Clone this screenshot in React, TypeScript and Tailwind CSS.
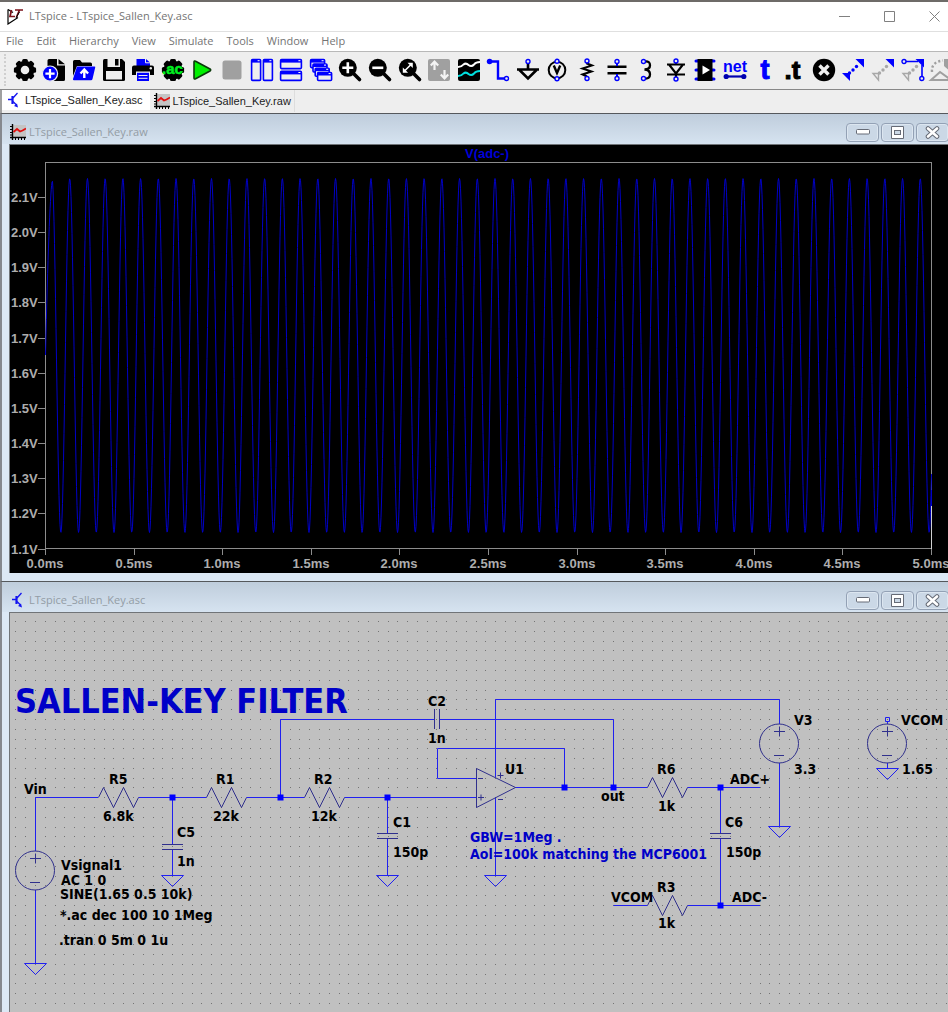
import React from "react";

const BLUE = "#0000ff";

/* ---------- toolbar icons, all on a 24 x 24 grid ---------- */

const teeth = [0, 45, 90, 135, 180, 225, 270, 315];

const Magnifier = ({ children }: { children: React.ReactNode }) => (
  <>
    <path d="M15 15L21.5 21.5" stroke="#000" strokeWidth="3.6" strokeLinecap="round" />
    <circle cx="9.8" cy="9.8" r="9" />
    <g stroke="#fff" strokeWidth="2.6" fill="none">{children}</g>
  </>
);

const Pin = ({ x, y }: { x: number; y: number }) => (
  <circle cx={x} cy={y} r="2" fill="#eee" stroke={BLUE} strokeWidth="1.4" />
);

const Pane = ({ x, y, w, h }: { x: number; y: number; w: number; h: number }) => (
  <>
    <rect x={x} y={y} width={w} height={h} rx="1" fill="#eee" stroke={BLUE} strokeWidth="1.6" />
    <rect x={x} y={y} width={w} height="3" fill={BLUE} />
    <rect x={x + w - 3} y={y + 0.6} width="2" height="1" fill="#fff" />
  </>
);

const Dots = ({ color }: { color: string }) => (
  <g fill={color}>
    <circle cx="8.5" cy="15" r="1.7" />
    <circle cx="12" cy="12" r="1.7" />
    <circle cx="15.500" cy="8.500" r="1.700" />
  </g>
);

const tools: { name: string; art: React.ReactNode }[] = [
  {
    name: "Settings",
    art: (
      <>
        <circle cx="12" cy="12" r="6.8" fill="none" stroke="#000" strokeWidth="5" />
        {teeth.map((a) => (
          <rect key={a} x="9.2" y="0.9" width="5.6" height="4" rx="1.5" transform={`rotate(${a} 12 12)`} />
        ))}
      </>
    ),
  },
  {
    name: "New schematic",
    art: (
      <>
        <path d="M7 1h8v6.500h8V21.500q0 1.500-1.500 1.500H5.500V2.500Q5.500 1 7 1zM16.500 1L23 6.200H16.500z" />
        <circle cx="8" cy="15.600" r="7.600" fill={BLUE} stroke="#eee" strokeWidth="1.2" />
        <path d="M8 11v9.200M3.400 15.600h9.200" stroke="#fff" strokeWidth="2.2" />
      </>
    ),
  },
  {
    name: "Open",
    art: (
      <>
        <path d="M1 18V3.500Q1 2 2.500 2H8l2 2.500h8.500Q20 4.500 20 6v2H5z" />
        <path d="M5 8.500H22.500q1 0 .7 1L20.500 21q-.3 1.300-1.500 1.300H2Q.8 22.300 1 21z" fill={BLUE} />
        <path d="M12.300 20v-7M8.500 15.500l3.800-4 3.800 4" stroke="#fff" strokeWidth="2.4" fill="none" />
      </>
    ),
  },
  {
    name: "Save",
    art: (
      <>
        <path d="M2.500 1H20l3 3V21.500q0 1.500-1.500 1.500h-19Q1 23 1 21.500v-19Q1 1 2.500 1z" />
        <rect x="5.500" y="1" width="12.500" height="8" fill="#eee" />
        <rect x="13" y="1" width="3.500" height="6.500" />
        <rect x="4" y="13" width="16" height="8.500" fill="#eee" />
      </>
    ),
  },
  {
    name: "Print",
    art: (
      <>
        <path d="M5.500 8V1h9.500l4 3.500V8z" fill={BLUE} />
        <path d="M14.500 1v3.800h4.500" fill="none" stroke="#eee" />
        <path d="M3 7.500h18q2 0 2 2V17h-4v-3.500H5V17H1V9.500q0-2 2-2z" />
        <circle cx="19.800" cy="10.300" r="1.200" fill="#eee" />
        <path d="M6 14.800h12V23H6z" fill={BLUE} />
        <path d="M7.500 17.500h9M7.500 20.300h9" stroke="#eee" />
      </>
    ),
  },
  {
    name: "AC analysis",
    art: (
      <>
        <circle cx="12" cy="12" r="9.600" />
        {teeth.map((a) => (
          <rect key={a} x="9" y="0.900" width="6" height="5" rx="1.500" transform={`rotate(${a} 12 12)`} />
        ))}
        <text x="11.500" y="16" textAnchor="middle" fontSize="15" fontWeight="bold" fill="#00f020" stroke="#00f020" strokeWidth="0.500" className="font-['Liberation_Sans']">
          .ac
        </text>
      </>
    ),
  },
  {
    name: "Run",
    art: <path d="M4 4Q4 2.400 5.600 3.200L20 11q1.400 1 0 2L5.600 20.800Q4 21.600 4 20z" fill="#00f000" stroke="#0a3a0a" strokeWidth="1.6" />,
  },
  { name: "Stop", art: <rect x="2.500" y="2.500" width="19" height="19" rx="2.500" fill="#a0a0a0" /> },
  { name: "Tile vertically", art: <><Pane x={1.600} y={1.600} w={9} h={20.800} /><Pane x={13.400} y={1.600} w={9} h={20.800} /></> },
  { name: "Tile horizontally", art: <><Pane x={1.600} y={1.600} w={20.800} h={9} /><Pane x={1.600} y={13.400} w={20.800} h={9} /></> },
  {
    name: "Cascade",
    art: <><Pane x={1.600} y={1.600} w={14} h={8} /><Pane x={4} y={6} w={14} h={8} /><Pane x={6.200} y={10.200} w={14} h={8} /><Pane x={8.600} y={14.500} w={14} h={8} /></>,
  },
  { name: "Zoom in", art: <Magnifier><path d="M9.800 4.300v11M4.300 9.800h11" /></Magnifier> },
  { name: "Zoom out", art: <Magnifier><path d="M4.300 9.800h11" /></Magnifier> },
  {
    name: "Zoom to fit",
    art: (
      <Magnifier>
        <path d="M6.500 13l6.500-6.500" strokeWidth="1.6" />
        <path d="M9.500 4.800h5.300v5.300zM4.800 9.500v5.300h5.300z" fill="#fff" stroke="none" />
      </Magnifier>
    ),
  },
  {
    name: "Autorange",
    art: (
      <>
        <rect x="1" y="1" width="22" height="22" rx="2" fill="#a0a0a0" />
        <path d="M7.500 12V4.500M3.800 7.500l3.700-4 3.700 4M17.500 12v7.500M13.800 16.500l3.700 4 3.700-4" stroke="#f4f4f4" strokeWidth="2.200" fill="none" />
      </>
    ),
  },
  {
    name: "Waveforms",
    art: (
      <>
        <rect x="1" y="1" width="22" height="22" rx="2" />
        <path d="M1 9q3.500 0 5.500-2.500 2.500-2 5 .5 3 2.300 5.500-.5Q19 4 23 4" stroke="#fff" strokeWidth="2" fill="none" />
        <path d="M1 18q3.500 0 5.500-2.500 2.500-2 5 .5 3 2.300 5.500-.5Q19 13 23 13" stroke="#00e0e0" strokeWidth="2" fill="none" />
      </>
    ),
  },
  {
    name: "Wire",
    art: (
      <>
        <path d="M3 3.500h9v17h7" stroke={BLUE} strokeWidth="2.400" fill="none" />
        <circle cx="3.600" cy="3.500" r="2.800" fill={BLUE} />
        <Pin x={20.500} y={20.500} />
      </>
    ),
  },
  {
    name: "Ground",
    art: (
      <>
        <path d="M1 11.500h22M12 5v6.500M3.500 12L12 20.500 20.500 12" stroke="#000" strokeWidth="2.600" fill="none" />
        <Pin x={12} y={3.500} />
      </>
    ),
  },
  {
    name: "Voltage",
    art: (
      <>
        <circle cx="12" cy="12" r="8.300" fill="none" stroke="#000" strokeWidth="2" />
        <path d="M8.800 7.500l3.200 7.500 3.200-7.500" fill="none" stroke="#000" strokeWidth="2.400" />
        <Pin x={12} y={3.300} />
        <Pin x={12} y={20.700} />
      </>
    ),
  },
  {
    name: "Resistor",
    art: (
      <>
        <path d="M12 4l0 1.500 5 2-9.500 3L16.500 13.500 7.500 16.500l4.500 2" stroke="#000" strokeWidth="2" fill="none" />
        <Pin x={12} y={3} />
        <Pin x={12} y={20.500} />
      </>
    ),
  },
  {
    name: "Capacitor",
    art: (
      <>
        <path d="M2.500 8.700h19M2.500 15.300h19" stroke="#000" strokeWidth="2.400" />
        <path d="M12 5v3M12 16v3" stroke={BLUE} strokeWidth="2" />
        <Pin x={12} y={3.500} />
        <Pin x={12} y={20.500} />
      </>
    ),
  },
  {
    name: "Inductor",
    art: (
      <>
        <path d="M11 3.500q5-.5 5 3.800 0 4.200-5.500 4.200Q16 12 16 16.200q0 4.800-5 4.300" stroke="#000" strokeWidth="2.300" fill="none" />
        <Pin x={9.500} y={3.500} />
        <Pin x={9.500} y={20.500} />
      </>
    ),
  },
  {
    name: "Diode",
    art: (
      <>
        <path d="M3 6.500h18M3 16.500h18M5 6.500l7 9 7-9M12 4v3M12 16v3" stroke="#000" strokeWidth="2.100" fill="none" />
        <Pin x={12} y={3} />
        <Pin x={12} y={21} />
      </>
    ),
  },
  {
    name: "Component",
    art: (
      <>
        <path d="M3 3h4M3 12h4M3 21h4M17 3h4M17 12h4M17 21h4" stroke={BLUE} strokeWidth="3" strokeLinecap="round" />
        <rect x="4.500" y="1" width="15" height="22" />
        <path d="M9.500 7.500l7.500 4.500-7.500 4.500z" fill="#fff" />
      </>
    ),
  },
  {
    name: "Net name",
    art: (
      <>
        <text x="12" y="13.500" textAnchor="middle" fontSize="16" fontWeight="bold" fill={BLUE} className="font-['Liberation_Sans']">
          net
        </text>
        <path d="M3 18.500h18" stroke="#0000b0" strokeWidth="2.200" />
        <circle cx="3.200" cy="18.500" r="2.600" fill="#0000b0" />
        <circle cx="20.800" cy="18.500" r="2.600" fill="#0000b0" />
      </>
    ),
  },
  {
    name: "Text",
    art: (
      <text x="12" y="21" textAnchor="middle" fontSize="27" fontWeight="bold" fill={BLUE} stroke={BLUE} className="font-['Liberation_Sans']">
        t
      </text>
    ),
  },
  {
    name: "Directive",
    art: (
      <text x="10.500" y="21" textAnchor="middle" fontSize="26" fontWeight="bold" stroke="#000" className="font-['Liberation_Sans']">
        .t
      </text>
    ),
  },
  {
    name: "Delete",
    art: (
      <>
        <circle cx="12" cy="12" r="11.200" />
        <path d="M7.500 7.500l9 9M16.500 7.500l-9 9" stroke="#eee" strokeWidth="3.400" />
      </>
    ),
  },
  { name: "Duplicate", art: <><path d="M14.500 1H23v8.500zM1 15h8v8z" fill={BLUE} /><Dots color={BLUE} /></> },
  {
    name: "Move",
    art: (
      <>
        <path d="M14.500 1H23v8.500z" fill={BLUE} />
        <path d="M2 15.500h5.500v6.500z" fill="none" stroke="#a8a8a8" strokeWidth="1.400" />
        <Dots color="#a8a8a8" />
      </>
    ),
  },
  {
    name: "Drag",
    art: (
      <>
        <path d="M14.500 1H23v8.500z" fill={BLUE} />
        <path d="M4 3.500h13M21 7v12" stroke={BLUE} strokeWidth="1.600" />
        <path d="M2 15.500h5.500v6.500z" fill="none" stroke="#a8a8a8" strokeWidth="1.400" />
        <Dots color="#a8a8a8" />
        <Pin x={3} y={3.500} />
        <Pin x={20.800} y={20.500} />
      </>
    ),
  },
  {
    name: "Rotate",
    art: (
      <>
        <path d="M2 14Q1 4 13 2.500" fill="none" stroke="#a0a0a0" strokeWidth="2.400" strokeDasharray="2.200 2.200" />
        <path d="M14 1h9v15l-9-8z" fill="#a0a0a0" />
        <path d="M1 22h20L10 14z" fill="none" stroke="#a0a0a0" strokeWidth="2" />
      </>
    ),
  },
];

/* ---------- small window icons ---------- */

const PlotIcon = () => (
  <svg className="size-4 shrink-0" viewBox="0 0 16 16">
    <rect x="3" y="1" width="13" height="12" fill="#c4c4c4" />
    <path d="M2.500 0v16M0 13.500h16" stroke="#000" strokeWidth="1.400" />
    <path d="M0 2.500h2M0 5.500h2M0 8.500h2M0 11h2M5.500 14v2M8.500 14v2M11.500 14v2M14.500 14v2" stroke="#000" />
    <path d="M3.500 8l3.500-3 3 2.500 2.500-1L16 4.500" fill="none" stroke="#e01010" strokeWidth="1.800" />
  </svg>
);

const TransistorIcon = () => (
  <svg className="size-4 shrink-0" viewBox="0 0 16 16" fill="none" stroke="#1414f0">
    <path d="M6.500 4v8" strokeWidth="2.200" />
    <path d="M2 7.500h4.500M7 6l4.500-5M7 9.500l3.500 3.500" strokeWidth="1.300" />
    <path d="M12 15.500l-4-1.500L11 11.500z" fill="#1414f0" stroke="none" />
  </svg>
);

const LogoIcon = () => (
  <svg className="h-4 w-[17px] shrink-0" viewBox="0 0 17 16">
    <path d="M1 0.500V15L11 8.500" fill="none" stroke="#000" strokeWidth="1.200" />
    <path d="M1 0.500l5 3" stroke="#000" strokeWidth="1.200" />
    <path d="M4.500 1L3 7.500h5M8 1h8M12.500 1L9.500 8" fill="none" stroke="#7a1018" strokeWidth="1.700" />
    <path d="M12.500 3L9 9" stroke="#000" />
  </svg>
);

const frameButton =
  "flex h-[19px] w-[33px] items-center justify-center rounded-sm border border-[#93a1b5] bg-[#cbd8e6] shadow-[inset_0_0_0_1px_#dce6f0]";

const ChildTitle = ({ icon, title }: { icon: React.ReactNode; title: string }) => (
  <header className="flex h-[30px] shrink-0 items-center bg-linear-to-b from-[#bfcddc] to-[#d6e3f0] pt-[6px] pl-2">
    {icon}
    <h2 className="ml-[3px] flex-1 font-['Open_Sans',sans-serif] text-[11px] text-[#939ca5]">{title}</h2>
    <div className="-mr-px flex gap-[2px]">
      <button aria-label="Minimize" className={frameButton}>
        <svg className="h-[6px] w-[14px]" viewBox="0 0 14 6">
          <rect x="0.500" y="0.500" width="13" height="4.500" rx="1" fill="#fff" stroke="#666b76" />
        </svg>
      </button>
      <button aria-label="Maximize" className={frameButton}>
        <svg className="size-[13px]" viewBox="0 0 13 13">
          <path d="M.5.500h12v12H.5z" fill="#fff" stroke="#666b76" />
          <rect x="3.500" y="4.500" width="6" height="4" fill="#cbd8e6" stroke="#666b76" />
        </svg>
      </button>
      <button aria-label="Close" className={frameButton}>
        <svg className="h-[13px] w-[15px]" viewBox="0 0 15 13">
          <path d="M3 2.500l9 8M12 2.500l-9 8" stroke="#666b76" strokeWidth="4.600" strokeLinecap="round" />
          <path d="M3 2.500l9 8M12 2.500l-9 8" stroke="#fff" strokeWidth="2.600" strokeLinecap="round" />
        </svg>
      </button>
    </div>
  </header>
);

/* ---------- waveform plot ---------- */

const PERIOD = 17.72;
const LEFT = 35.5;
const RIGHT = 921.5;
const TOP = 17.5;
const BOTTOM = 403.5;

const wavePath = (() => {
  const level = (x: number) => 210.5 - 177 * Math.cos((2 * Math.PI * (x - 42)) / PERIOD);
  let d = "M35.5 210Q39 60 42 37";
  for (let x = 42.5; x <= RIGHT; x += 0.5) d += `L${x} ${level(x).toFixed(1)}`;
  return d;
})();

const volts = ["2.1V", "2.0V", "1.9V", "1.8V", "1.7V", "1.6V", "1.5V", "1.4V", "1.3V", "1.2V", "1.1V"];
const times = ["0.0ms", "0.5ms", "1.0ms", "1.5ms", "2.0ms", "2.5ms", "3.0ms", "3.5ms", "4.0ms", "4.5ms", "5.0ms"];

const Plot = () => (
  <svg className="block h-[428px] w-full bg-black" role="img" aria-label="V(adc-)">
    <g fill="none" stroke="#8c8c8c" shapeRendering="crispEdges">
      <path d={`M${LEFT} ${TOP}H${RIGHT}V${BOTTOM}H${LEFT}z`} />
      {volts.map((v, i) => (
        <path key={v} d={`M28 ${Math.round(52 + i * 35.15) + 0.5}H${LEFT}`} />
      ))}
      {times.map((t, i) => (
        <path key={t} d={`M${Math.round(35 + i * 88.6) + 0.5} ${BOTTOM}v6`} />
      ))}
    </g>
    <path d={wavePath} fill="none" stroke="#0000c8" />
    <path d="M921.5 345v16" stroke="#0000c8" />
    <path d="M921.5 361v43" stroke="#d0d0d0" />
    <g className="font-['Liberation_Sans',sans-serif] text-[13px] font-bold" fill="#adadad">
      {volts.map((v, i) => (
        <text key={v} x="1" y={57 + Math.round(i * 35.15)}>
          {v}
        </text>
      ))}
      {times.map((t, i) => (
        <text key={t} x={35 + Math.round(i * 88.6)} y="423" textAnchor="middle">
          {t}
        </text>
      ))}
      <text x="477" y="13" textAnchor="middle" fill="#0000d8">
        V(adc-)
      </text>
    </g>
  </svg>
);

/* ---------- schematic ---------- */

const gridPath = (() => {
  let d = "";
  for (let r = 0; r < 130; r++)
    for (let c = 0; c < 260; c++) d += `M${Math.round(5.4 + c * 9.793)} ${Math.round(8 + r * 9.793)}h1v1h-1z`;
  return d;
})();

const resistors = [
  [98.5, 797.5],
  [206.5, 797.5],
  [304.5, 797.5],
  [647.5, 787.5],
  [647.5, 905.5],
];
const grounds = [
  [35.5, 963.5],
  [172.5, 875.5],
  [387.5, 875.5],
  [495.5, 875.5],
  [779.5, 826.5],
  [887.5, 768.5],
];
const sources = [
  [35, 870.5],
  [779, 743.5],
  [887, 743.5],
];
const nodes = [
  [172.5, 797.5],
  [280.5, 797.5],
  [387.5, 797.5],
  [564.5, 787.5],
  [613.5, 787.5],
  [720.5, 787.5],
  [720.5, 905.5],
];
const labels: [string, number, number][] = [
  ["Vin", 24, 794],
  ["R5", 109, 784],
  ["6.8k", 103, 821],
  ["R1", 216, 784],
  ["22k", 213, 821],
  ["R2", 314, 784],
  ["12k", 311, 821],
  ["C5", 177, 837],
  ["1n", 177, 866],
  ["C2", 428, 706],
  ["1n", 428, 743],
  ["C1", 393, 827],
  ["150p", 393, 857],
  ["U1", 505, 774],
  ["out", 601, 801],
  ["R6", 657, 774],
  ["1k", 658, 811],
  ["ADC+", 730, 784],
  ["C6", 725, 827],
  ["150p", 726, 857],
  ["V3", 794, 725],
  ["3.3", 794, 774],
  ["VCOM", 901, 725],
  ["1.65", 902, 774],
  ["VCOM", 611, 902],
  ["R3", 657, 892],
  ["1k", 658, 928],
  ["ADC-", 732, 902],
  ["Vsignal1", 61, 870],
  ["AC 1 0", 61, 885],
  ["SINE(1.65 0.5 10k)", 60, 899],
  ["*.ac dec 100 10 1Meg", 60, 920],
  [".tran 0 5m 0 1u", 59, 945],
];

const wires =
  "M98 797.5H35.5V851M35.500 890V963M138.500 797.500H206.500M246.500 797.500H304.500M344.500 797.500H476.500" +
  "M172.500 797.500V844.500M172.500 849.500V875.500M280.500 797.500V719.500H434.500M439.500 719.500H613.500V787.500" +
  "M387.500 797.500V833.500M387.500 838.500V875.500M476.500 778.500H437.500V748.500H564.500V787.500" +
  "M495.500 777.500V699.500H779.500V724M779.500 763V826.500M495.500 797.500V875.500M515.500 787.500H647.500" +
  "M687.500 787.500H760M720.500 787.500V833.500M720.500 838.500V905.500M613.500 905.500H647.500M687.500 905.500H760" +
  "M887.500 722V724M887.500 763V768.500M885.500 717.500h4v4h-4z";

const symbols =
  "M162 844.500h21M162 849.500h21M377 833.500h21M377 838.500h21M710 833.500h21M710 838.500h21" +
  "M434.500 709v20M439.500 709v20";

const Schematic = () => (
  <svg className="block min-h-[398px] w-full flex-1 bg-[#c0c0c0]" role="img" aria-label="Sallen-Key filter schematic">
    <path d={gridPath} fill="#747474" shapeRendering="crispEdges" />
    <g transform="translate(-10 -613)">
      <g fill="none" stroke="#2020f0">
        <path d={wires} />
        {grounds.map(([x, y]) => (
          <path key={`${x}`} d={`M${x - 11} ${y}h22l-11 11z`} />
        ))}
      </g>
      <g fill="none" stroke="#30308c">
        <path d={symbols} />
        {resistors.map(([x, y]) => (
          <path key={`${x}-${y}`} d={`M${x} ${y}l5 -10 10 20 10 -20 10 20 5 -10`} />
        ))}
        {sources.map(([x, y]) => (
          <g key={x}>
            <circle cx={x} cy={y} r="19.5" />
            <path d={`M${x - 5} ${y - 12}h11M${x + 0.5} ${y - 17}v10M${x - 5} ${y + 12}h10`} />
          </g>
        ))}
        <path d="M476.500 768.500V807.500L515.500 787.500z" />
        <path d="M478 778.500h5M478 797.500h6M481 794.500v6M497.500 775.500h6M500.500 772.500v6M498 799.500h5" />
      </g>
      <g fill={BLUE}>
        {nodes.map(([x, y]) => (
          <rect key={`${x}-${y}`} x={x - 3} y={y - 3} width="6" height="6" />
        ))}
      </g>
      <g className="font-['DejaVu_Sans_Condensed','DejaVu_Sans',sans-serif] text-[14px] font-bold">
        {labels.map(([text, x, y]) => (
          <text key={`${x}-${y}`} x={x} y={y}>
            {text}
          </text>
        ))}
        <text x="470" y="842" fill="#0000c8">
          GBW=1Meg .
        </text>
        <text x="470" y="859" fill="#0000c8">
          Aol=100k matching the MCP6001
        </text>
        <text x="15" y="713" fill="#0000c8" className="text-[34px]">
          SALLEN-KEY FILTER
        </text>
      </g>
    </g>
  </svg>
);

const ChildWindow = ({
  icon,
  title,
  grow,
  children,
}: {
  icon: React.ReactNode;
  title: string;
  grow?: boolean;
  children: React.ReactNode;
}) => (
  <section
    className={`flex flex-col border-t border-l-2 border-t-[#55585c] border-l-[#85888e] bg-[#dce8f5] ${grow ? "flex-1" : ""}`}
  >
    <ChildTitle icon={icon} title={title} />
    <div className={`ml-[7px] flex flex-col border-t border-l border-[#707478] ${grow ? "flex-1" : "mb-2"}`}>{children}</div>
  </section>
);

const menus = ["File", "Edit", "Hierarchy", "View", "Simulate", "Tools", "Window", "Help"];

export default function App() {
  return (
    <main className="flex min-h-screen flex-col overflow-hidden bg-[#eeeeee]">
      <header className="flex h-8 items-center border-t-2 border-b border-t-[#6e6b68] border-b-[#e0e0e0] bg-white pl-[7px]">
        <LogoIcon />
        <h1 className="ml-[5px] flex-1 font-['Open_Sans',sans-serif] text-[11px] text-[#747474]">LTspice - LTspice_Sallen_Key.asc</h1>
        <div className="flex gap-[34px] pr-2">
          <button aria-label="Minimize">
            <svg className="size-[11px]" viewBox="0 0 11 11"><path d="M0 5.500h11" stroke="#808080" /></svg>
          </button>
          <button aria-label="Maximize">
            <svg className="size-[11px]" viewBox="0 0 11 11"><path d="M.5.500h10v10H.5z" fill="none" stroke="#808080" /></svg>
          </button>
          <button aria-label="Close">
            <svg className="size-[11px]" viewBox="0 0 11 11"><path d="M.5.500l10 10M10.500.500l-10 10" stroke="#808080" /></svg>
          </button>
        </div>
      </header>

      <nav className="flex h-5 items-center gap-[13px] border-b border-[#b8b8b8] bg-white pl-[6px] font-['Open_Sans',sans-serif] text-[11px] text-[#747474]">
        {menus.map((m) => (
          <button key={m}>{m}</button>
        ))}
      </nav>

      <div role="toolbar" className="flex h-[38px] items-center border-b border-[#888888] pb-[2px] pl-1">
        <div className="h-8 w-[6px] shrink-0 border-l-2 border-dotted border-[#cfcfcf]" />
        <div className="-mr-[9px] flex flex-1">
          {tools.map((t) => (
            <button key={t.name} aria-label={t.name} className="flex min-w-0 flex-1 justify-center">
              <svg className="size-6 shrink-0 overflow-visible" viewBox="0 0 24 24">{t.art}</svg>
            </button>
          ))}
        </div>
      </div>

      <div role="tablist" className="flex h-[23px] items-start border-l-2 border-[#a0a0a0] font-['Liberation_Sans',sans-serif] text-[11px] text-[#1c1c1c]">
        <button role="tab" aria-selected="true" className="flex h-5 items-center gap-[3px] bg-white pr-[7px] pl-1">
          <TransistorIcon />
          LTspice_Sallen_Key.asc
        </button>
        <button role="tab" aria-selected="false" className="ml-1 flex h-[22px] items-center gap-[3px] border-r border-[#dddddd] pr-[3px]">
          <PlotIcon />
          LTspice_Sallen_Key.raw
        </button>
      </div>

      <ChildWindow icon={<PlotIcon />} title="LTspice_Sallen_Key.raw">
        <Plot />
      </ChildWindow>
      <ChildWindow icon={<TransistorIcon />} title="LTspice_Sallen_Key.asc" grow>
        <Schematic />
      </ChildWindow>
    </main>
  );
}
